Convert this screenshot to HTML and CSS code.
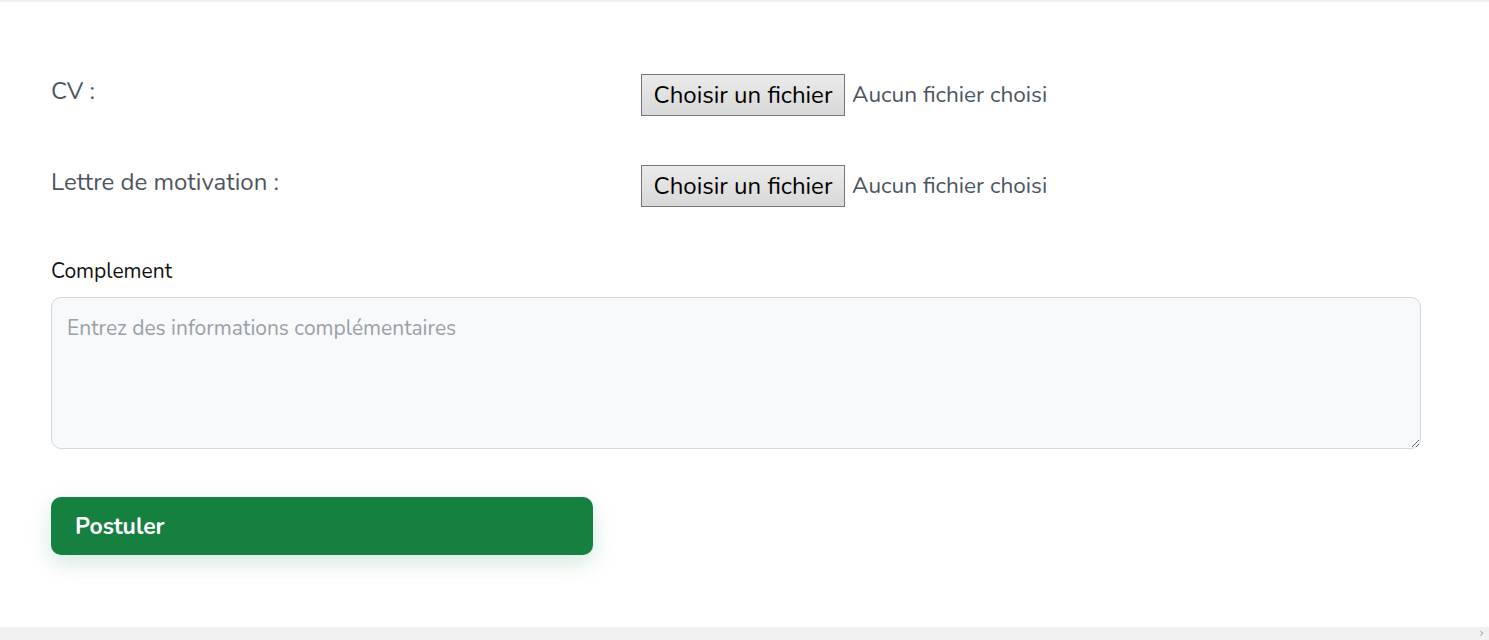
FILE: index.html
```html
<!DOCTYPE html>
<html lang="fr">
<head>
<meta charset="utf-8">
<title>Postuler</title>
<link rel="stylesheet" href="styles.css">
</head>
<body>
<div class="topline"></div>
<main class="page">
  <form class="form">
    <div class="row">
      <span class="row-label">CV :</span>
      <div class="file">
        <input class="file-input" type="file" id="cv">
        <label class="file-btn" for="cv">Choisir un fichier</label>
        <span class="file-name">Aucun fichier choisi</span>
      </div>
    </div>
    <div class="row">
      <span class="row-label">Lettre de motivation :</span>
      <div class="file">
        <input class="file-input" type="file" id="lettre">
        <label class="file-btn" for="lettre">Choisir un fichier</label>
        <span class="file-name">Aucun fichier choisi</span>
      </div>
    </div>
    <div class="field">
      <label class="field-label" for="complement">Complement</label>
      <textarea class="area" id="complement" placeholder="Entrez des informations complémentaires"></textarea>
    </div>
    <button class="submit" type="button">Postuler</button>
  </form>
</main>
<div class="hscroll"><span class="hscroll-arrow">›</span></div>
</body>
</html>
```
FILE: styles.css
```css
* { box-sizing: border-box; }
html, body { margin: 0; padding: 0; background: #ffffff; }
body {
  font-family: "Nunito", Lato, "Noto Sans", sans-serif;
  color: #212529;
  width: 1489px;
  height: 640px;
  overflow: hidden;
}
.topline { height: 2px; background: #eef0f3; }
.page { padding: 72px 68px 0 51px; }
.form { display: flex; flex-direction: column; }
.row {
  display: grid;
  grid-template-columns: 590px 1fr;
  align-items: start;
  margin-bottom: 49px;
}
.row-label {
  font-size: 24px;
  line-height: 34px;
  color: #4d5660;
}
.file {
  display: flex;
  align-items: center;
  height: 42px;
}
.file-input { display: none; }
.file-btn {
  display: inline-flex;
  align-items: center;
  height: 42px;
  padding: 0 11.5px;
  font-size: 24px;
  line-height: 28px;
  color: #000;
  background: linear-gradient(#ebebeb, #d8d8d8);
  border: 1px solid #767676;
  white-space: nowrap;
}
.file-name {
  margin-left: 7px;
  font-size: 22.6px;
  line-height: 28px;
  color: #4d5660;
  white-space: nowrap;
}
.field { display: flex; flex-direction: column; margin-top: 2px; }
.field-label {
  font-size: 21px;
  line-height: 27px;
  color: #111;
  margin-bottom: 12px;
}
.area {
  font-family: inherit;
  font-size: 21px;
  line-height: 27px;
  height: 152px;
  width: 100%;
  padding: 17px 15px 13px;
  background: #f8f9fa;
  border: 1px solid #d3d6da;
  border-radius: 10px;
  resize: vertical;
  color: #212529;
  outline: none;
}
.area::placeholder { color: #9aa0a8; }
.submit {
  margin-top: 48px;
  width: 542px;
  height: 58px;
  text-align: left;
  padding: 0 24px;
  background: #168040;
  color: #ffffff;
  font-family: inherit;
  font-size: 23px;
  font-weight: 700;
  border: none;
  border-radius: 10px;
  box-shadow: 0 8px 22px rgba(22, 128, 64, 0.18);
}
.hscroll {
  position: fixed;
  left: 0;
  right: 0;
  bottom: 0;
  height: 13px;
  background: #f1f1f1;
  display: flex;
  justify-content: flex-end;
  align-items: center;
  padding-right: 5px;
}
.hscroll-arrow {
  font-family: "DejaVu Sans", sans-serif;
  font-size: 12px;
  line-height: 13px;
  color: #a3a3a3;
}
```
